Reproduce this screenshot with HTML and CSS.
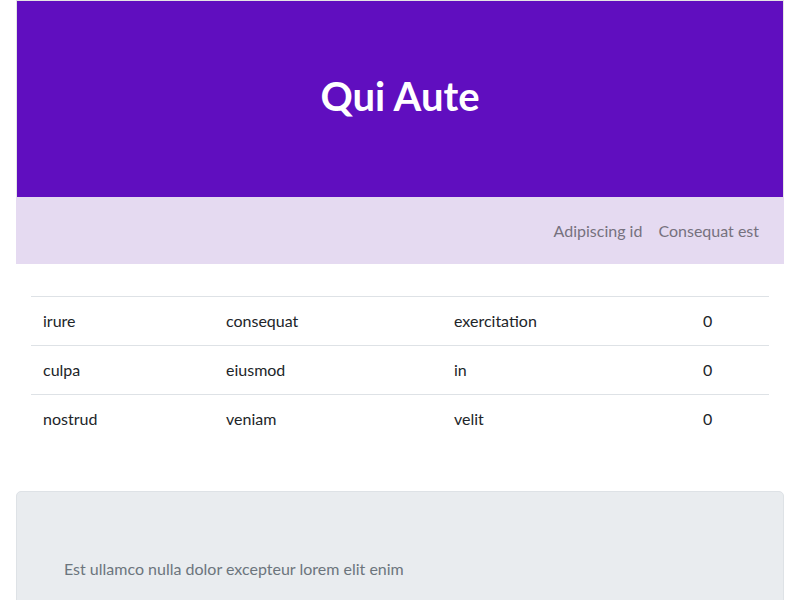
FILE: index.html
```html
<!DOCTYPE html>
<html lang="en">
<head>
<meta charset="utf-8">
<title>Qui Aute</title>
<link rel="stylesheet" href="styles.css">
</head>
<body>
<div class="page">
  <header class="hero">
    <h1 class="hero-title">Qui Aute</h1>
  </header>
  <nav class="subnav">
    <a class="subnav-link" href="#">Adipiscing id</a>
    <a class="subnav-link" href="#">Consequat est</a>
  </nav>
  <div class="table-wrap">
    <table class="data-table">
      <tbody>
        <tr><td class="c1">irure</td><td class="c2">consequat</td><td class="c3">exercitation</td><td class="c4">0</td></tr>
        <tr><td class="c1">culpa</td><td class="c2">eiusmod</td><td class="c3">in</td><td class="c4">0</td></tr>
        <tr><td class="c1">nostrud</td><td class="c2">veniam</td><td class="c3">velit</td><td class="c4">0</td></tr>
      </tbody>
    </table>
  </div>
  <section class="panel">
    <p class="panel-text">Est ullamco nulla dolor excepteur lorem elit enim</p>
  </section>
</div>
</body>
</html>
```
FILE: styles.css
```css
* { box-sizing: border-box; }
html, body { margin: 0; padding: 0; background: #fff; }
body {
  font-family: "Lato", "Noto Sans", sans-serif;
  font-size: 16px;
  color: #212529;
}
.page { padding: 0 16px; }
.hero {
  height: 197px;
  border: 1px solid #e4e4e4;
  border-bottom: 0;
  background: #600ebf;
  display: flex;
  align-items: center;
  justify-content: center;
  padding-bottom: 6px;
}
.hero-title {
  margin: 0;
  color: #fff;
  font-size: 40px;
  font-weight: 700;
  line-height: 1.2;
}
.subnav {
  height: 67px;
  background: #e5daf1;
  display: flex;
  justify-content: flex-end;
  align-items: center;
  gap: 16px;
  padding: 0 25px 0 0;
}
.subnav-link {
  color: #76717e;
  text-decoration: none;
  font-size: 16px;
}
.table-wrap { padding: 32px 15px 47px; }
.data-table {
  width: 100%;
  border-collapse: collapse;
}
.data-table td {
  border-top: 1px solid #dee2e6;
  height: 49px;
  padding: 0 12px 2px;
  vertical-align: middle;
}
.c1 { width: 183px; }
.c2 { width: 228px; }
.c3 { width: 237px; }
.c4 { padding-left: 24px !important; }
.panel {
  background: #e9ecef;
  border: 1px solid #dee2e6;
  border-radius: 5px;
  height: 140px;
  padding: 65px 47px 0;
}
.panel-text {
  margin: 0;
  color: #6c757d;
  font-size: 16px;
  line-height: 24px;
}
```
